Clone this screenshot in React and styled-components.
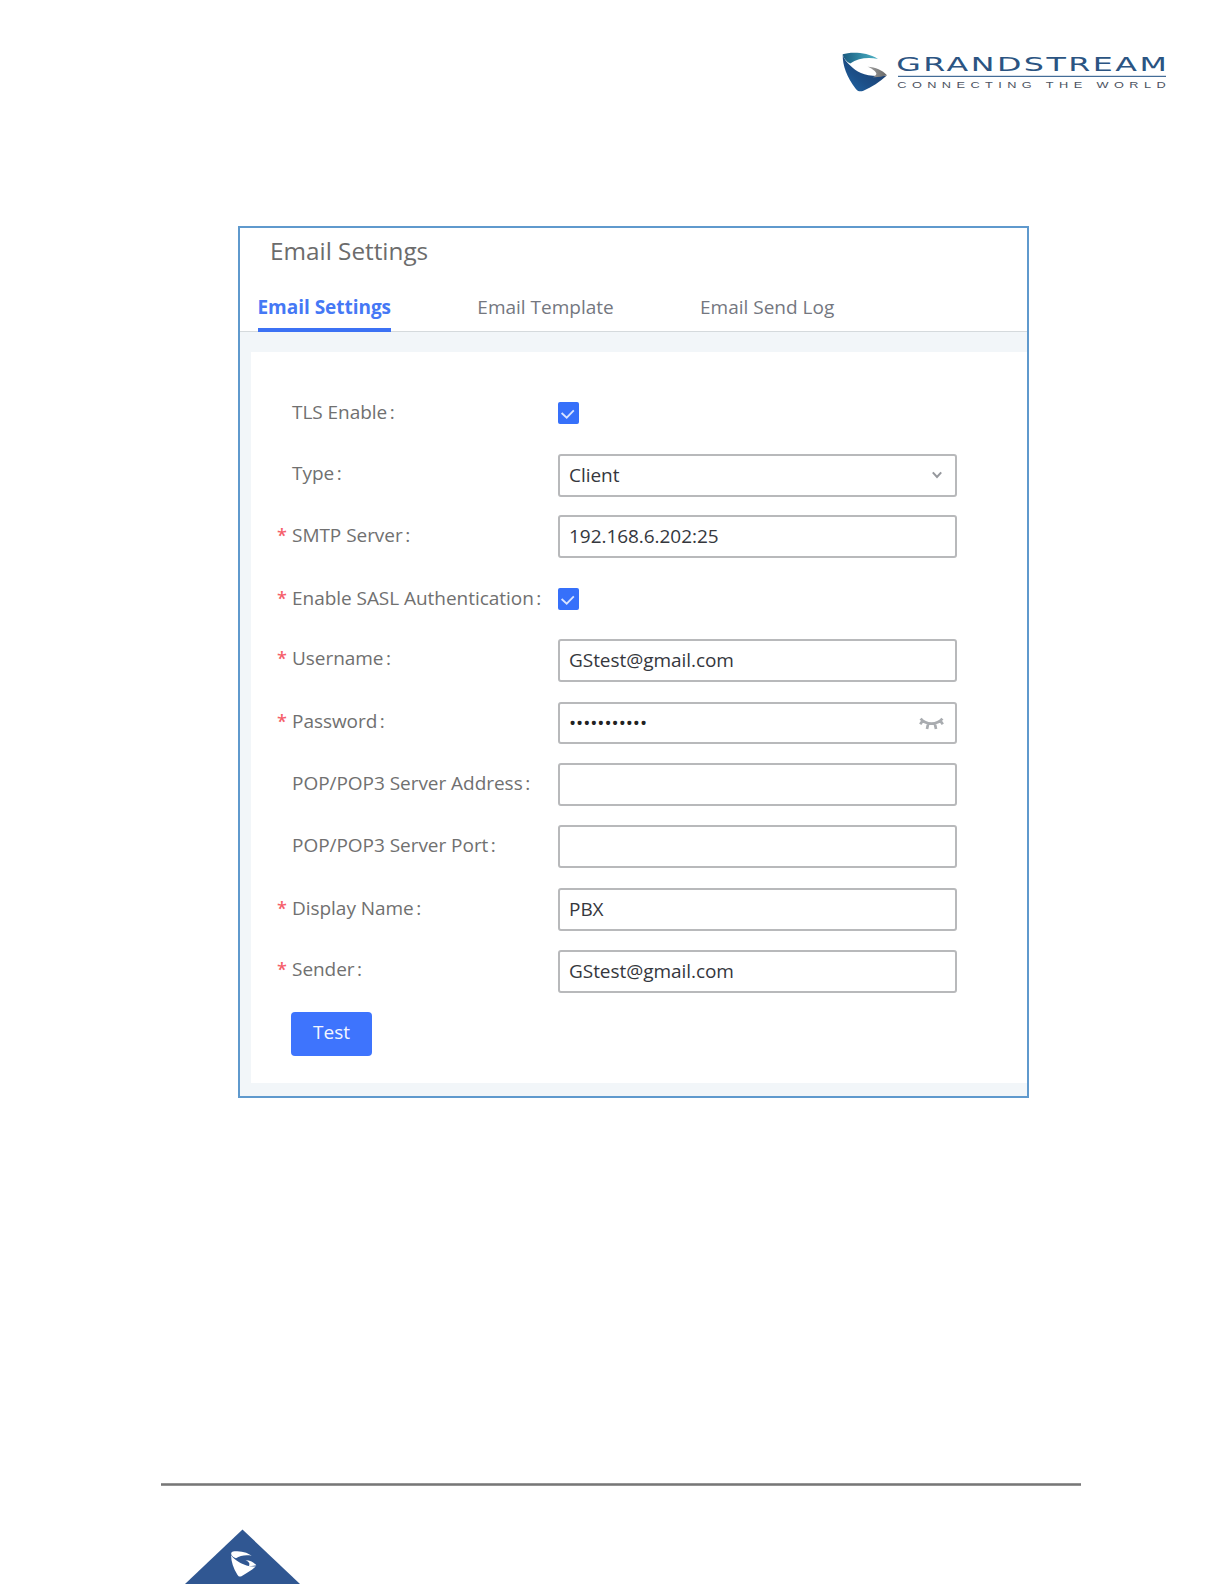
import React, { useState } from "react";
import styled, { createGlobalStyle } from "styled-components";

const GlobalStyle = createGlobalStyle`
  * {
    box-sizing: border-box;
  }

  body {
    margin: 0;
    background: #fff;
    font-family: "Open Sans", "Noto Sans", sans-serif;
  }
`;

const Page = styled.div`
  display: flex;
  flex-direction: column;
  width: 1224px;
  height: 1584px;
  overflow: hidden;
  background: #fff;
`;

const PageHeader = styled.header`
  display: flex;
  justify-content: flex-end;
  height: 226px;
  padding: 50px 50px 0 0;
`;

const Frame = styled.section`
  display: flex;
  flex-direction: column;
  width: 791px;
  height: 872px;
  margin-left: 238px;
  border: 2px solid #5f99cd;
  background: #f2f6f9;
`;

const FrameHead = styled.div`
  height: 104px;
  background: #fff;
  border-bottom: 1px solid #d5dadd;
`;

const Title = styled.h1`
  margin: 0;
  padding-left: 30px;
  font-size: 24.3px;
  font-weight: 400;
  line-height: 45px;
  color: #6c6c6c;
`;

const Tabs = styled.nav`
  display: flex;
  height: 59px;
  padding-left: 17.5px;
`;

const Tab = styled.a`
  height: 59px;
  margin-right: 86.3px;
  border-bottom: 4px solid ${({ $active }) => ($active ? "#3c71f4" : "transparent")};
  font-size: 19px;
  font-weight: ${({ $active }) => ($active ? 700 : 400)};
  line-height: 68px;
  letter-spacing: ${({ $active }) => ($active ? "-0.03px" : "0")};
  white-space: nowrap;
  color: ${({ $active }) => ($active ? "#4578f5" : "#74777f")};
`;

const Card = styled.form`
  display: flex;
  flex-direction: column;
  height: 731px;
  margin: 20px 0 0 11px;
  padding: 40px 0 0 25px;
  background: #fff;
`;

const Row = styled.div`
  display: flex;
  align-items: flex-start;
  height: ${({ $height }) => $height}px;
`;

const Label = styled.label`
  display: flex;
  width: 282px;
  padding-top: ${({ $drop }) => $drop}px;
  font-size: 19px;
  line-height: 39px;
  letter-spacing: -0.04px;
  white-space: nowrap;
  color: #707070;
`;

const Star = styled.span`
  width: 16px;
  padding-left: 1px;
  font-size: 18px;
  font-weight: 600;
  color: #f5606a;
`;

const Colon = styled.span`
  margin-left: 2.5px;
`;

const Control = styled.div`
  display: flex;
  justify-content: space-between;
  width: 399px;
  height: ${({ $height }) => $height || 43}px;
  padding: 0 10px 0 9px;
  border: 2px solid #b8b9bb;
  border-radius: 3px;
  font-size: 19px;
  line-height: 39px;
  letter-spacing: -0.05px;
  color: #35373d;
`;

const Dots = styled.span`
  line-height: 38px;
  color: #222;
`;

const Checkbox = styled.button`
  display: flex;
  width: 21px;
  height: 22px;
  margin-top: 9.5px;
  padding: 0;
  border: 0;
  border-radius: 2px;
  background: ${({ $checked }) => ($checked ? "#3670fa" : "#b8b9bb")};
`;

const TestButton = styled.button`
  width: 81px;
  height: 44px;
  margin-left: 15px;
  padding: 0 0 3px;
  border: 0;
  border-radius: 4px;
  background: #3e74fd;
  font-family: inherit;
  font-size: 19px;
  line-height: 41px;
  color: #f3f6ff;
`;

const PageFooter = styled.footer`
  display: flex;
  flex-direction: column;
  margin-top: auto;
`;

const Rule = styled.hr`
  width: 920px;
  height: 3px;
  margin: 0 0 43px 161px;
  border: 0;
  background: linear-gradient(#a3a3a3, #777 50%, #a3a3a3);
`;

const Corner = styled.svg`
  display: block;
  margin-left: 184px;
`;

const Logo = () => (
  <svg width="336" height="46" viewBox="0 0 336 46">
    <defs>
      <linearGradient id="teal" x1="0" x2="1" y1="0" y2="0">
        <stop offset="0" stopColor="#195a80" />
        <stop offset="0.55" stopColor="#358ea8" />
        <stop offset="1" stopColor="#4fb4c6" />
      </linearGradient>
      <linearGradient id="navy" x1="0" x2="1" y1="1" y2="0">
        <stop offset="0" stopColor="#2268a8" />
        <stop offset="0.35" stopColor="#1c5089" />
        <stop offset="1" stopColor="#1d3461" />
      </linearGradient>
      <linearGradient id="steel" x1="0" x2="1" y1="0" y2="0">
        <stop offset="0" stopColor="#a2a2a2" />
        <stop offset="1" stopColor="#666" />
      </linearGradient>
    </defs>
    <path
      d="M4.7 4.2C12 2 28 1.4 40 8.9C30 6.9 20 8 12.2 13.6C8.5 11.5 5.5 8.5 4.7 4.2Z"
      fill="url(#teal)"
    />
    <path
      d="M4.7 4.2C5.5 8.5 9 12.5 12.5 15.8C19 22.5 29 27.8 48.8 25.5C42 32 33.5 37 25.4 40.8C22 42 19.5 41.3 17.5 38.5C9 27 4.5 16 4.7 4.2Z"
      fill="url(#navy)"
    />
    <path
      d="M29.5 16.8C37.5 17.2 44.5 20.3 49 25.3C44 26.9 39 27.5 34.8 27.2C37.8 25.8 38.8 24.4 38.2 23C37.3 20.9 33.5 18.3 29.5 16.8Z"
      fill="url(#steel)"
    />
    <text
      transform="translate(58.3 21) scale(1.62 1)"
      fontFamily="DejaVu Sans, sans-serif"
      fontSize="19.6"
      textLength="167"
      fill="#2b5482"
    >
      GRANDSTREAM
    </text>
    <rect x="60" y="25.8" width="268" height="1.1" fill="#2f5d8c" />
    <text
      transform="translate(59.3 38.3) scale(1.42 1)"
      fontFamily="Liberation Sans, sans-serif"
      fontSize="9"
      textLength="189"
      fill="#4c5361"
    >
      CONNECTING THE WORLD
    </text>
  </svg>
);

const FooterMark = () => (
  <Corner width="118" height="55" viewBox="0 0 118 55">
    <path d="M58.5 0.5L116 55H1Z" fill="#305792" />
    <path
      d="M47.2 25.2C46.8 23 48.5 22.1 51 22.2C57 22.2 63.5 23.3 67.7 26.8C62 25.8 56 26.5 52 29.3C49.5 28.5 48 27 47.2 25.2Z"
      fill="#fff"
    />
    <path
      d="M47.1 26.1C48.5 28.7 51.5 31 55.2 33.3C60 36.1 64.5 37.6 71.7 37.6C67 41.8 62.5 44.5 57.5 47.2C55.7 48 54.5 47.5 53.4 45.7C49.5 39.5 47 33 47.1 26.1Z"
      fill="#fff"
    />
    <path
      d="M61.5 31.2C66.2 31.2 69.8 33 72.3 36.3C69.5 37 67 37 64.8 36.7C66.3 34.8 65 32.5 61.5 31.2Z"
      fill="#fff"
    />
  </Corner>
);

const Check = () => (
  <svg width="21" height="22" viewBox="0 0 21 22">
    <path d="M3.6 11L8.7 15.7L15.8 8.4" fill="none" stroke="#d9e4ff" strokeWidth="1.8" />
  </svg>
);

const Arrow = styled.svg`
  margin-right: 3px;
`;

const Chevron = () => (
  <Arrow width="10" height="39" viewBox="0 0 10 39">
    <path d="M0.8 16.4L5 21L9.2 16.4" fill="none" stroke="#96989d" strokeWidth="2" />
  </Arrow>
);

const Eye = styled.svg`
  margin-right: 1px;
`;

const ClosedEye = () => (
  <Eye width="25" height="38" viewBox="0 0 25 38">
    <path
      d="M1.6 14.6C7 21.2 18 21.2 23.4 14.6M3.8 16.6L1.2 20.2M9.2 19.4L8 25M15.8 19.4L17 25M21.2 16.6L23.8 20.2"
      fill="none"
      stroke="#a9acb0"
      strokeWidth="2.7"
    />
  </Eye>
);

const fields = [
  { label: "TLS Enable", type: "check", height: 62, drop: 1 },
  { label: "Type", value: "Client", type: "select", height: 61 },
  { label: "SMTP Server", value: "192.168.6.202:25", required: true, height: 63, drop: 1 },
  { label: "Enable SASL Authentication", type: "check", required: true, height: 61, drop: 1 },
  { label: "Username", value: "GStest@gmail.com", required: true, height: 63 },
  { label: "Password", value: "•••••••••••", type: "password", required: true, height: 61 },
  { label: "POP/POP3 Server Address", value: "", height: 62, drop: 1 },
  { label: "POP/POP3 Server Port", value: "", height: 63, drop: 1 },
  { label: "Display Name", value: "PBX", required: true, height: 62, drop: 1 },
  { label: "Sender", value: "GStest@gmail.com", required: true, height: 62 },
];

const Field = ({ label, value, type, required, height, drop = 0 }) => {
  const [checked, setChecked] = useState(true);

  return (
    <Row $height={height}>
      <Label $drop={drop}>
        <Star>{required && "*"}</Star>
        {label}
        <Colon>:</Colon>
      </Label>
      {type === "check" ? (
        <Checkbox type="button" $checked={checked} onClick={() => setChecked(!checked)}>
          {checked && <Check />}
        </Checkbox>
      ) : (
        <Control $height={type === "password" ? 42 : 43}>
          {type === "password" ? <Dots>{value}</Dots> : value}
          {type === "select" && <Chevron />}
          {type === "password" && <ClosedEye />}
        </Control>
      )}
    </Row>
  );
};

const App = () => (
  <>
    <GlobalStyle />
    <Page>
      <PageHeader>
        <Logo />
      </PageHeader>

      <Frame>
        <FrameHead>
          <Title>Email Settings</Title>
          <Tabs>
            <Tab $active>Email Settings</Tab>
            <Tab>Email Template</Tab>
            <Tab>Email Send Log</Tab>
          </Tabs>
        </FrameHead>
        <Card>
          {fields.map((field) => (
            <Field key={field.label} {...field} />
          ))}
          <TestButton type="button">Test</TestButton>
        </Card>
      </Frame>

      <PageFooter>
        <Rule />
        <FooterMark />
      </PageFooter>
    </Page>
  </>
);

export default App;
